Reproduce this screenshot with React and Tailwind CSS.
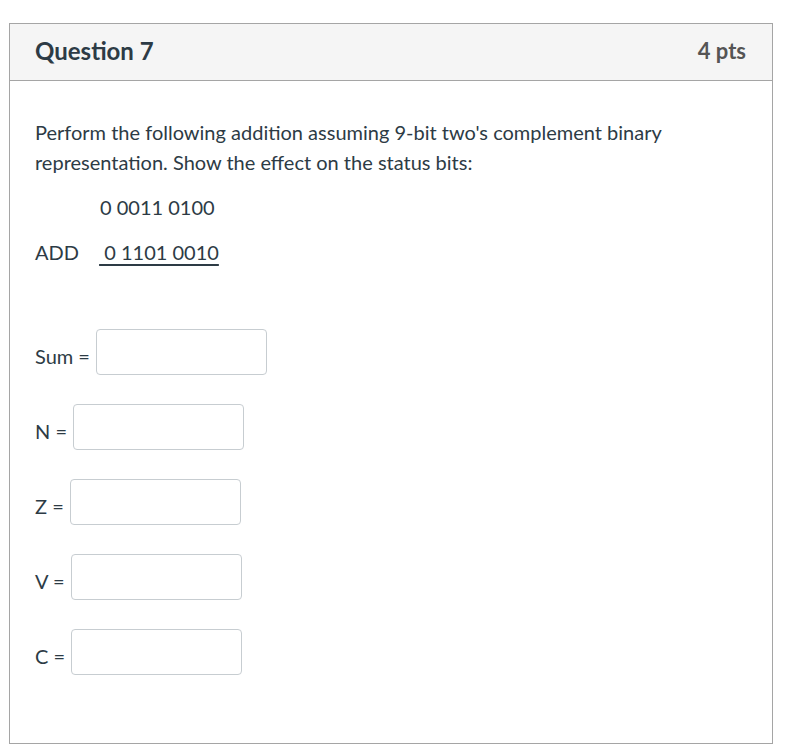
const fields = [
  { label: 'Sum =' },
  { label: 'N =' },
  { label: 'Z =' },
  { label: 'V =' },
  { label: 'C =' },
]

export default function App() {
  return (
    <div className="min-h-[747px] w-[805px] bg-white pt-[23px] pl-[9px] font-['Lato','Liberation_Sans',sans-serif] text-[#2d3b45]">
      <div className="w-[764px] h-[721px] border border-[#a5a5a5] flex flex-col">
        {/* header */}
        <div className="h-[57px] shrink-0 bg-[#f5f5f5] border-b border-[#a5a5a5] flex items-center justify-between pl-[25px] pr-[26px] pb-[3px]">
          <h2 className="text-[24px] font-bold text-[#2d3b45]">Question 7</h2>
          <span className="text-[22px] font-bold text-[#555]">4 pts</span>
        </div>

        {/* body */}
        <div className="pl-[25px] pt-[36px] text-[20px] leading-[30px]">
          <p>
            Perform the following addition assuming 9-bit two's complement binary
            <br />
            representation. Show the effect on the status bits:
          </p>
          <p className="mt-[15px] pl-[65px]">0 0011 0100</p>
          <p className="mt-[15px]">
            ADD{' '}
            <span className="ml-[15px] underline underline-offset-[4px]">&nbsp;0 1101 0010</span>
          </p>

          <div className="mt-[62px] flex flex-col gap-[29px]">
            {fields.map((f) => (
              <div key={f.label} className="flex items-center gap-[6px]">
                <span className="mt-[8px] text-[20px]">{f.label}</span>
                <input
                  type="text"
                  className="w-[171px] h-[46px] rounded-[4px] border border-[#c7cdd1] bg-white outline-none"
                />
              </div>
            ))}
          </div>
        </div>
      </div>
    </div>
  )
}
